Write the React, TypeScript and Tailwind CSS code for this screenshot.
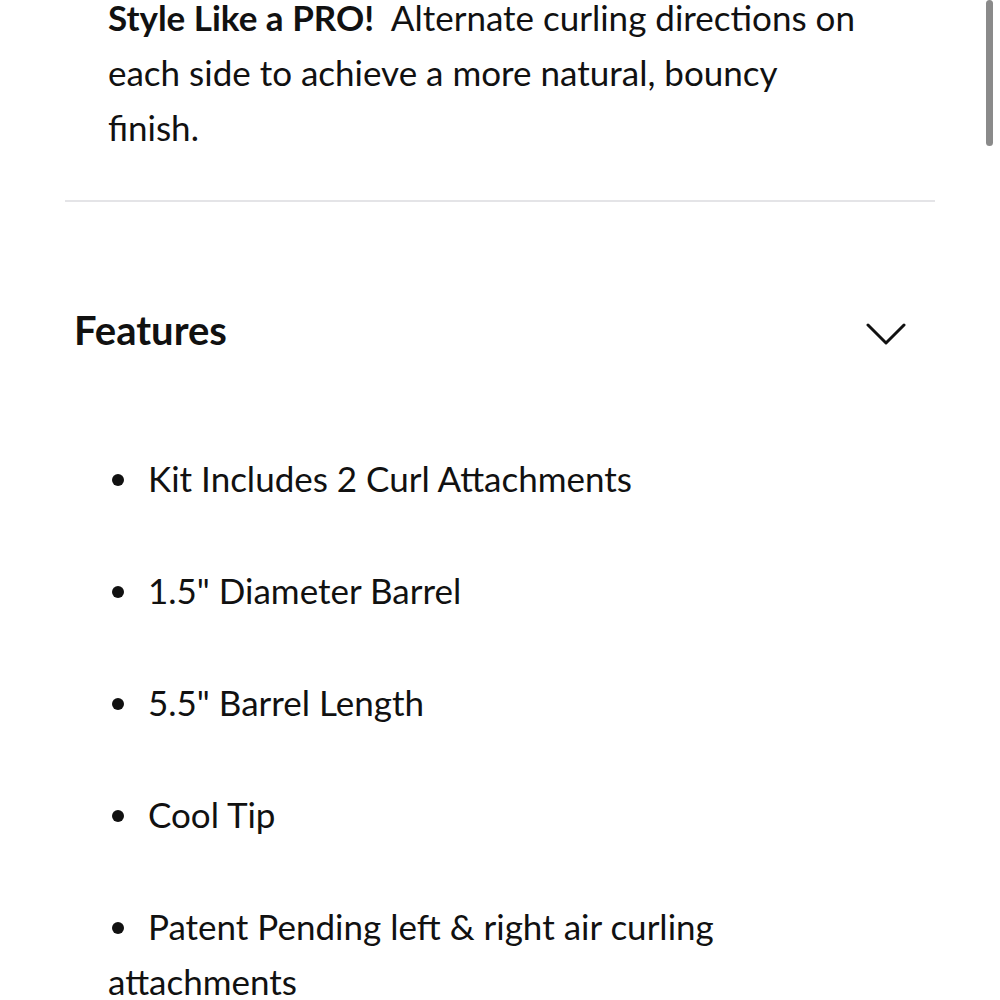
import React from "react";

const items = [
  "Kit Includes 2 Curl Attachments",
  '1.5" Diameter Barrel',
  '5.5" Barrel Length',
  "Cool Tip",
  "Patent Pending left & right air curling attachments",
];

export default function App() {
  return (
    <div
      className="relative w-[1000px] h-[1000px] overflow-hidden bg-white text-[#111111]"
      style={{ fontFamily: "Lato, 'Noto Sans', sans-serif" }}
    >
      <div className="absolute right-[7px] top-0 w-[7px] h-[146px] rounded-full bg-[#8a8a8a]" />
      <div className="pl-[108px] w-[870px] mt-[-10px]">
        <p className="text-[35px] leading-[55px]">
          <span className="font-bold">Style Like a PRO!</span>
          {"\u00a0 "}Alternate curling directions on each side to achieve a more natural, bouncy finish.
        </p>
      </div>
      <div className="mx-[65px] mt-[45px] h-[2px] bg-[#e4e4e7]" />
      <div className="flex items-center justify-between pl-[74px] pr-[94px] mt-[103px] h-[50px]">
        <h2 className="text-[40px] font-bold leading-[50px]">Features</h2>
        <svg className="mt-[8px]" width="40" height="24" viewBox="0 0 40 24" fill="none" stroke="#111" strokeWidth="3" strokeLinecap="round" strokeLinejoin="round">
          <path d="M2 3 L20 21 L38 3" />
        </svg>
      </div>
      <ul className="pl-[108px] w-[870px] mt-[96px] flex flex-col gap-[57px]">
        {items.map((t) => (
          <li key={t} className="text-[35px] leading-[55px]">
            <span className="inline-block w-[40px] align-middle">
              <span className="block w-[12px] h-[12px] rounded-full bg-[#111111] ml-[4px] mb-[6px]" />
            </span>
            {t}
          </li>
        ))}
      </ul>
    </div>
  );
}
